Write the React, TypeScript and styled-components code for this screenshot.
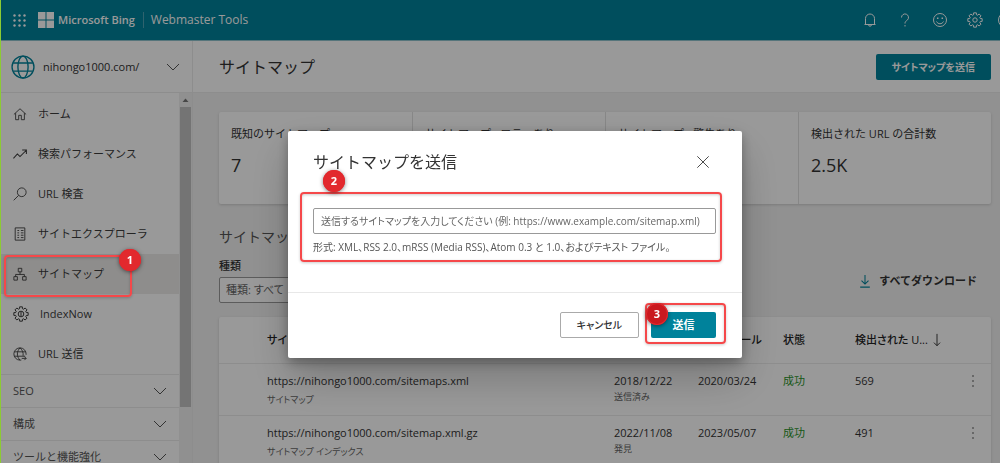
import React from "react";
import styled, { createGlobalStyle, css } from "styled-components";

const GlobalStyle = createGlobalStyle`
  *, *::before, *::after { box-sizing: border-box; }
  body {
    margin: 0;
    font-family: "Open Sans", "Noto Sans CJK JP", sans-serif;
    font-size: 11px;
    line-height: 16px;
    color: #333;
  }
  button, input, select { font: inherit; font-feature-settings: inherit; color: inherit; }
  button { cursor: pointer; }
  h1, h2, p { margin: 0; font-weight: 400; }
`;

const proportional = css`
  font-feature-settings: "palt";
`;

const App = styled.div`
  height: 100vh;
  display: flex;
  flex-direction: column;
  overflow: hidden;
  border-left: 1px solid #8ccb33;
  background: #f2f2f2;
`;

const TopBar = styled.header`
  flex: none;
  height: 41px;
  display: flex;
  align-items: center;
  justify-content: space-between;
  padding-left: 12px;
  background: #00829b;
  border-bottom: 1px solid #8fc3ce;
  color: #fff;
  overflow: hidden;
`;

const Brand = styled.div`
  display: flex;
  align-items: center;
  font-weight: 600;
`;

const LogoText = styled.span`
  margin: 0 8px 0 4px;
`;

const Product = styled.span`
  padding-left: 7px;
  border-left: 1px solid #4fa6b7;
  font-size: 12px;
  font-weight: 500;
`;

const Waffle = styled.svg`
  margin-right: 12px;
`;

const TopActions = styled.div`
  display: flex;
  align-items: center;
  gap: 19px;
  margin-right: -14px;
`;

const IconButton = styled.button`
  display: flex;
  padding: 0;
  border: 0;
  background: none;
`;

const Avatar = styled.span`
  width: 16px;
  height: 16px;
  margin-left: -4px;
  border: 1px solid #fff;
  border-radius: 50%;
`;

const Body = styled.div`
  flex: 1;
  min-height: 0;
  display: flex;
`;

const Sidebar = styled.aside`
  flex: none;
  width: 192px;
  display: flex;
  flex-direction: column;
  background: #fff;
  border-right: 1px solid #ebebeb;
`;

const SitePicker = styled.button`
  flex: none;
  height: 52px;
  display: flex;
  align-items: center;
  gap: 8px;
  padding: 0 12px 0 10px;
  border: 0;
  border-bottom: 1px solid #ececec;
  background: #fff;
  text-align: left;
`;

const SiteName = styled.span`
  flex: 1;
`;

const SidebarScroll = styled.div`
  flex: 1;
  min-height: 0;
  display: flex;
`;

const Nav = styled.nav`
  flex: 1;
  padding-top: 1px;
  overflow: hidden;
`;

const NavItem = styled.div<{ $active?: boolean }>`
  position: relative;
  background: ${(p) => (p.$active ? "#edebe9" : "transparent")};
`;

const NavLink = styled.a`
  height: 40px;
  display: flex;
  align-items: center;
  gap: 11px;
  padding-left: 12px;
  color: #3c3c3c;
  text-decoration: none;
`;

const NavGroup = styled.button`
  width: 100%;
  height: 33px;
  display: flex;
  align-items: center;
  justify-content: space-between;
  padding: 0 12px;
  border: 0;
  border-top: 1px solid #ececec;
  background: none;
  color: #555;
`;

const ScrollTrack = styled.div`
  width: 13px;
  display: flex;
  flex-direction: column;
  align-items: center;
  background: #f1f1f1;
`;

const ScrollArrow = styled.svg`
  flex: none;
`;

const ScrollThumb = styled.div`
  width: 11px;
  height: 81%;
  background: #c1c1c1;
`;

const Main = styled.main`
  flex: 1;
  min-width: 0;
  overflow: hidden;
`;

const PageHead = styled.div`
  height: 52px;
  display: flex;
  align-items: center;
  justify-content: space-between;
  padding: 0 9px 0 26px;
  border-bottom: 1px solid #ebebeb;
  background: #fff;
`;

const PageTitle = styled.h1`
  font-size: 16px;
  line-height: 24px;
`;

const Button = styled.button<{ $primary?: boolean; $short?: boolean }>`
  ${proportional}
  height: 26px;
  padding: 0 16px;
  border-radius: 2px;
  white-space: nowrap;
  font-size: ${(p) => (p.$short ? "11px" : "10px")};
  ${(p) =>
    p.$primary
      ? css`
          min-width: 65px;
          border: 0;
          background: #00829b;
          color: #fff;
          font-weight: 700;
        `
      : css`
          min-width: 78px;
          border: 1px solid #aaa;
          background: #fff;
          color: #333;
          font-weight: 500;
        `}
`;

const Content = styled.div`
  padding: 19px 9px 0 26px;
`;

const panel = css`
  background: #fff;
  border-radius: 2px;
  box-shadow: 0 1px 3px rgba(0, 0, 0, 0.16);
`;

const Stats = styled.dl`
  ${panel}
  margin: 0;
  display: grid;
  grid-template-columns: repeat(4, 1fr);
`;

const Stat = styled.div`
  height: 92px;
  padding: 14px 12px;
  & + & { border-left: 1px solid #e1e1e1; }
`;

const StatLabel = styled.dt``;

const StatValue = styled.dd`
  margin: 11px 0 0;
  font-size: 18px;
  line-height: 24px;
`;

const SectionTitle = styled.h2`
  margin: 23px 0 11px;
  font-size: 14px;
  line-height: 20px;
  color: #555;
`;

const Filters = styled.div`
  ${proportional}
  display: flex;
  align-items: flex-end;
  justify-content: space-between;
  margin-bottom: 14px;
`;

const FilterField = styled.div`
  display: flex;
  flex-direction: column;
  gap: 3px;
  width: 160px;
`;

const FilterLabel = styled.label`
  font-weight: 500;
`;

const Select = styled.select`
  appearance: none;
  height: 26px;
  padding: 0 6px;
  border: 1px solid #999;
  border-radius: 2px;
  background: #fff;
  color: #666;
`;

const DownloadLink = styled.a`
  display: flex;
  align-items: center;
  gap: 7px;
  padding: 0 14px 14px 0;
  font-feature-settings: normal;
  font-weight: 700;
  color: #333;
  text-decoration: none;
`;

const TablePanel = styled.div`
  ${panel}
`;

const Table = styled.table`
  ${proportional}
  width: 100%;
  table-layout: fixed;
  border-collapse: collapse;
  text-align: left;
`;

const HeadCell = styled.th`
  height: 46px;
  padding: 0;
  font-weight: 500;
  white-space: nowrap;
  color: #222;
`;

const SortLabel = styled.span`
  display: flex;
  align-items: center;
  gap: 2px;
`;

const Cell = styled.td<{ $tone?: "success" }>`
  height: 52px;
  padding: 9px 0 0;
  border-top: 1px solid #ececec;
  vertical-align: top;
  color: ${(p) => (p.$tone === "success" ? "#2a932a" : "#333")};
`;

const SubText = styled.div<{ $spaced?: boolean }>`
  margin-top: ${(p) => (p.$spaced ? "3px" : "0")};
  font-size: 9px;
  color: #666;
`;

const MoreButton = styled(IconButton)`
  margin-left: 4px;
`;

const Backdrop = styled.div`
  position: fixed;
  inset: 0 0 0 1px;
  z-index: 1;
  display: flex;
  justify-content: center;
  align-items: center;
  padding: 26px 0 0 29px;
  background: rgba(0, 0, 0, 0.4);
`;

const Dialog = styled.form`
  width: 454px;
  background: #fff;
  border-radius: 2px;
  box-shadow: 0 20px 40px rgba(0, 0, 0, 0.22), 0 4px 12px rgba(0, 0, 0, 0.3);
`;

const DialogHead = styled.div`
  display: flex;
  align-items: center;
  justify-content: space-between;
  padding: 19px 32px 18px 25px;
`;

const DialogTitle = styled.h2`
  font-size: 16px;
  line-height: 24px;
`;

const DialogField = styled.div`
  position: relative;
  margin: 0 20px 30px 12px;
  padding: 16px 6px 7px 13px;
`;

const UrlInput = styled.input`
  ${proportional}
  width: 100%;
  height: 26px;
  padding: 0 7px;
  border: 1px solid #999;
  border-radius: 2px;
  background: #fff;
  font-size: 10px;
  &::placeholder { color: #666; opacity: 1; }
`;

const Hint = styled.p`
  ${proportional}
  margin-top: 5px;
  font-size: 10px;
  color: #555;
  white-space: nowrap;
`;

const DialogFoot = styled.div`
  display: flex;
  justify-content: flex-end;
  gap: 12px;
  padding: 19px 26px 20px;
  border-top: 1px solid #e8e8e8;
`;

const DialogAction = styled.div`
  position: relative;
  display: flex;
`;

const MarkFrame = styled.span<{ $inset: string }>`
  position: absolute;
  inset: ${(p) => p.$inset};
  z-index: 2;
  border: 2px solid #f5484a;
  border-radius: 4px;
  box-shadow: 0 1px 3px rgba(0, 0, 0, 0.2), inset 0 1px 3px rgba(0, 0, 0, 0.2);
  pointer-events: none;
`;

const MarkBadge = styled.span<{ $x: number; $y: number; $dark?: boolean }>`
  position: absolute;
  left: ${(p) => p.$x}px;
  top: ${(p) => p.$y}px;
  z-index: 3;
  width: 22px;
  height: 22px;
  border-radius: 50%;
  background: ${(p) => (p.$dark ? "#c9191f" : "#e2292e")};
  box-shadow: 0 1px 4px rgba(0, 0, 0, 0.5), inset 0 0 0 1px #e2292e;
  color: #fff;
  font: 700 11px/22px "Noto Sans", sans-serif;
  text-align: center;
  pointer-events: none;
`;

type MarkProps = { label: string; inset: string; x: number; y: number; dark?: boolean };
const Mark = ({ label, inset, x, y, dark }: MarkProps) => (
  <>
    <MarkFrame $inset={inset} />
    <MarkBadge $x={x} $y={y} $dark={dark}>{label}</MarkBadge>
  </>
);

const Icon = ({ size = 16, w = 1, color = "currentColor", children }: {
  size?: number; w?: number; color?: string; children: React.ReactNode;
}) => (
  <svg width={size} height={size} viewBox="0 0 16 16" fill="none" stroke={color} strokeWidth={w} aria-hidden="true">
    {children}
  </svg>
);

// Outline of a gear centred on (8, 8): each tooth adds two outer and two inner corners.
const gearOutline = (teeth: number, outer: number, inner: number) => {
  const step = (Math.PI * 2) / teeth;
  const corners = Array.from({ length: teeth }, (_, i) =>
    [[-0.34, inner], [-0.24, outer], [0.24, outer], [0.34, inner]].map(([shift, r]) => {
      const angle = (i + shift) * step;
      return `${(8 + r * Math.sin(angle)).toFixed(2)} ${(8 - r * Math.cos(angle)).toFixed(2)}`;
    })
  ).flat();
  return `M${corners.join("L")}z`;
};

const Gear = ({ hub }: { hub: number }) => (
  <>
    <path d={gearOutline(8, 7.3, 5.5)} strokeLinejoin="round" />
    <circle cx="8" cy="8" r={hub} />
  </>
);

const ChevronDown = () => (
  <svg width="14" height="8" viewBox="0 0 14 8" fill="none" stroke="#555" aria-hidden="true">
    <path d="M1 1l6 6 6-6" />
  </svg>
);

const Globe = ({ size, color, w }: { size: number; color: string; w: number }) => (
  <Icon size={size} color={color} w={w}>
    <circle cx="8" cy="8" r="7.300" />
    <ellipse cx="8" cy="8" rx="3.400" ry="7.300" />
    <path d="M1.400 5.300h13.200M1.400 10.700h13.200" />
  </Icon>
);

const navItems = [
  { label: "ホーム", icon: <Icon size={14}><path d="M1 8.500l7-6.500 7 6.500M3 7V14.500h3.500V9.500h3v5H13V7" /></Icon> },
  { label: "検索パフォーマンス", icon: <Icon size={14} w={1.2}><path d="M.5 13l4.500-5 3 3L15 4M10.500 3.500H15.300V8" /></Icon> },
  { label: "URL 検査", icon: <Icon size={14}><circle cx="10" cy="6" r="5" /><path d="M6.500 9.500L.8 15.200" /></Icon> },
  { label: "サイトエクスプローラ", icon: <Icon size={14}><path d="M2.500 1h11v14h-11zM5 4h2M9 4h3M5 6.700h2M9 6.700h3M5 9.400h2M9 9.400h3M5 12.100h2M9 12.100h3" /></Icon> },
  { label: "サイトマップ", active: true, icon: <Icon size={14}><path d="M6 1.500h4v4H6zM1 11h4v4H1zM11 11h4v4h-4zM8 5.500V8.500M3 11V8.500h10V11" /></Icon> },
  { label: "IndexNow", icon: <Icon><Gear hub={2.8} /><path d="M8 6v4" /></Icon> },
  { label: "URL 送信", icon: <Icon size={14}><circle cx="8" cy="8" r="7" strokeDasharray="33 8" transform="rotate(92 8 8)" /><path d="M8 1C4 5 4 11 8 15M8 1c3 2.500 4 6 3.500 9M1.500 5.500h13M1.500 10.500H14M10 13h5M13 11l2 2-2 2" /></Icon> },
];

const rows = [
  { url: "https://nihongo1000.com/sitemaps.xml", kind: "サイトマップ", sent: "2018/12/22", how: "送信済み", crawled: "2020/03/24", count: "569" },
  { url: "https://nihongo1000.com/sitemap.xml.gz", kind: "サイトマップ インデックス", sent: "2022/11/08", how: "発見", crawled: "2023/05/07", count: "491" },
];

const stats = [
  ["既知のサイトマップ", "7"],
  ["サイトマップ - エラーあり", ""],
  ["サイトマップ - 警告あり", ""],
  ["検出された URL の合計数", "2.5K"],
];

export default function SitemapsPage() {
  return (
    <App>
      <GlobalStyle />
      <TopBar>
        <Brand>
          <Waffle width="13" height="13" viewBox="0 0 13 13" fill="#fff" aria-hidden="true">
            {[1.5, 6.5, 11.5].map((y) => [1.5, 6.5, 11.5].map((x) => <circle key={`${x}-${y}`} cx={x} cy={y} r="1.200" />))}
          </Waffle>
          <svg width="16" height="16" viewBox="0 0 16 16" fill="#fff" aria-hidden="true">
            <path d="M0 0h7.500v7.500H0zM8.500 0H16v7.500H8.500zM0 8.500h7.500V16H0zM8.500 8.500H16V16H8.500z" />
          </svg>
          <LogoText>Microsoft Bing</LogoText>
          <Product>Webmaster Tools</Product>
        </Brand>
        <TopActions>
          <IconButton aria-label="通知"><Icon color="#fff"><path d="M3.500 12V6.500a4.500 4.500 0 0 1 9 0V12M2.500 12.500h11M6.500 12.700a1.500 1.500 0 0 0 3 0" /></Icon></IconButton>
          <IconButton aria-label="ヘルプ"><Icon color="#fff"><path d="M4.500 5.500a3.500 3.500 0 1 1 6 2.400C9 9.200 8 9.500 8 11.500M8 13v1.500" /></Icon></IconButton>
          <IconButton aria-label="フィードバック"><Icon color="#fff"><circle cx="8" cy="8" r="6.500" /><path d="M4.500 9.500c1.500 3 5.500 3 7 0" /><path d="M5.700 5.500v1.500M10.300 5.500v1.500" strokeWidth="1.500" /></Icon></IconButton>
          <IconButton aria-label="設定"><Icon color="#fff"><Gear hub={2.2} /></Icon></IconButton>
          <Avatar />
        </TopActions>
      </TopBar>
      <Body>
        <Sidebar>
          <SitePicker>
            <Globe size={24} color="#00829b" w={0.9} />
            <SiteName>nihongo1000.com/</SiteName>
            <ChevronDown />
          </SitePicker>
          <SidebarScroll>
            <Nav>
              {navItems.map((item) => (
                <NavItem key={item.label} $active={item.active}>
                  <NavLink href="#">{item.icon}{item.label}</NavLink>
                  {item.active && <Mark label="1" inset="1px 47px -3px 3px" x={118} y={-5} />}
                </NavItem>
              ))}
              <NavGroup>SEO<ChevronDown /></NavGroup>
              <NavGroup>構成<ChevronDown /></NavGroup>
              <NavGroup>ツールと機能強化<ChevronDown /></NavGroup>
            </Nav>
            <ScrollTrack>
              <ScrollArrow width="13" height="14" viewBox="0 0 13 14" aria-hidden="true">
                <path d="M3.500 9L6.500 5.500 9.500 9z" fill="#777" />
              </ScrollArrow>
              <ScrollThumb />
            </ScrollTrack>
          </SidebarScroll>
        </Sidebar>
        <Main>
          <PageHead>
            <PageTitle>サイトマップ</PageTitle>
            <Button $primary>サイトマップを送信</Button>
          </PageHead>
          <Content>
            <Stats>
              {stats.map(([label, value]) => (
                <Stat key={label}>
                  <StatLabel>{label}</StatLabel>
                  <StatValue>{value}</StatValue>
                </Stat>
              ))}
            </Stats>
            <SectionTitle>サイトマップ</SectionTitle>
            <Filters>
              <FilterField>
                <FilterLabel htmlFor="kind">種類</FilterLabel>
                <Select id="kind"><option>種類: すべて</option></Select>
              </FilterField>
              <DownloadLink href="#">
                <Icon size={14} color="#00829b" w={1.2}><path d="M8 1v10.500M4 7.500l4 4 4-4M2.500 15h11" /></Icon>
                すべてダウンロード
              </DownloadLink>
            </Filters>
            <TablePanel>
              <Table>
                <colgroup>
                  <col style={{ width: "48px" }} />
                  <col />
                  <col style={{ width: "84px" }} />
                  <col style={{ width: "85px" }} />
                  <col style={{ width: "72px" }} />
                  <col style={{ width: "110px" }} />
                  <col style={{ width: "26px" }} />
                </colgroup>
                <thead>
                  <tr>
                    <HeadCell />
                    <HeadCell>サイトマップ</HeadCell>
                    <HeadCell>送信日</HeadCell>
                    <HeadCell>最終クロール</HeadCell>
                    <HeadCell>状態</HeadCell>
                    <HeadCell>
                      <SortLabel>
                        検出された U...
                        <Icon size={14}><path d="M8 1v13.500M4.500 11L8 14.500 11.500 11" /></Icon>
                      </SortLabel>
                    </HeadCell>
                    <HeadCell />
                  </tr>
                </thead>
                <tbody>
                  {rows.map((row) => (
                    <tr key={row.url}>
                      <Cell />
                      <Cell>{row.url}<SubText $spaced>{row.kind}</SubText></Cell>
                      <Cell>{row.sent}<SubText>{row.how}</SubText></Cell>
                      <Cell>{row.crawled}</Cell>
                      <Cell $tone="success">成功</Cell>
                      <Cell>{row.count}</Cell>
                      <Cell>
                        <MoreButton aria-label="その他">
                          <svg width="8" height="16" viewBox="0 0 8 16" fill="#444" aria-hidden="true">
                            <circle cx="4" cy="3" r=".8" /><circle cx="4" cy="8" r=".8" /><circle cx="4" cy="13" r=".8" />
                          </svg>
                        </MoreButton>
                      </Cell>
                    </tr>
                  ))}
                </tbody>
              </Table>
            </TablePanel>
          </Content>
        </Main>
      </Body>
      <Backdrop>
        <Dialog role="dialog" aria-labelledby="dialog-title">
          <DialogHead>
            <DialogTitle id="dialog-title">サイトマップを送信</DialogTitle>
            <IconButton type="button" aria-label="閉じる">
              <Icon size={14}><path d="M1.500 1.500l13 13M14.500 1.500l-13 13" /></Icon>
            </IconButton>
          </DialogHead>
          <DialogField>
            <UrlInput aria-labelledby="dialog-title" placeholder="送信するサイトマップを入力してください (例: https://www.example.com/sitemap.xml)" />
            <Hint>形式: XML、RSS 2.0、mRSS (Media RSS)、Atom 0.3 と 1.0、およびテキスト ファイル。</Hint>
            <Mark label="2" inset="0" x={23} y={-22} />
          </DialogField>
          <DialogFoot>
            <Button type="button">キャンセル</Button>
            <DialogAction>
              <Button type="button" $primary $short>送信</Button>
              <Mark label="3" inset="-9px -10px -6px -6px" x={-5} y={-9} dark />
            </DialogAction>
          </DialogFoot>
        </Dialog>
      </Backdrop>
    </App>
  );
}
